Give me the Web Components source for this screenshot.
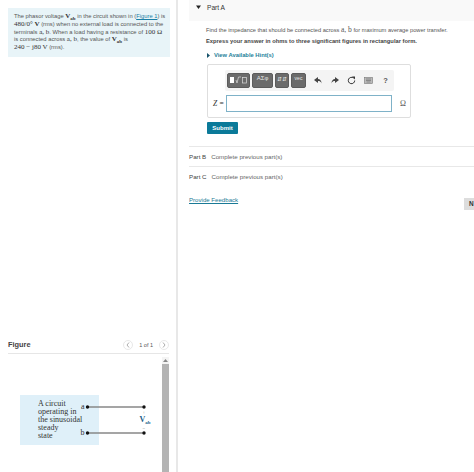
<!DOCTYPE html>
<html>
<head>
<meta charset="utf-8">
<title>Part A</title>
<style>
  html, body { margin: 0; padding: 0; height: 472px; overflow: hidden; background: #fff; }
  body { font-family: "Liberation Sans", Arial, sans-serif; color: #333; }
</style>
</head>
<body>
<problem-page></problem-page>

<script>
class ProblemPage extends HTMLElement {
    constructor() {
        super();
        this.shadowDOM = this.attachShadow({ mode: 'open' })
    }

    connectedCallback() {
        this.shadowDOM.innerHTML = `
        <style>
            :host { display: flex; width: 474px; height: 472px; overflow: hidden; }
            .left { width: 176px; flex: none; border-right: 2px solid #e8e8e8; display: flex; flex-direction: column; }
            .right { flex: 1; min-width: 0; padding-left: 11px; }
        </style>
        <div class="left">
            <statement-box></statement-box>
            <figure-panel></figure-panel>
        </div>
        <div class="right">
            <part-a></part-a>
            <part-row name="Part B"></part-row>
            <part-row name="Part C"></part-row>
            <feedback-row></feedback-row>
        </div>
        `;
    }
}

class StatementBox extends HTMLElement {
    constructor() {
        super();
        this.shadowDOM = this.attachShadow({ mode: 'open' })
    }

    connectedCallback() {
        this.shadowDOM.innerHTML = `
        <style>
            :host { display: block; margin: 8px 6px 0 8px; background: #e8f4f8; padding: 5px 5px 0 6px; height: 49px; box-sizing: border-box; font-size: 5.8px; line-height: 7.8px; color: #555; white-space: nowrap; }
            b, .m { font-family: "Liberation Serif", serif; font-size: 7px; color: #333; }
            b { font-weight: bold; }
            sub { font-size: 5px; line-height: 0; }
            a { color: #1a7fa6; text-decoration: underline; }
        </style>
        The phasor voltage <b>V<sub>ab</sub></b> in the circuit shown in (<a>Figure 1</a>) is<br>
        <span class="m">480/0° <b>V</b></span> (rms) when no external load is connected to the<br>
        terminals <span class="m">a, b</span>. When a load having a resistance of <span class="m">100 Ω</span><br>
        is connected across <span class="m">a, b</span>, the value of <b>V<sub>ab</sub></b> is<br>
        <span class="m">240 − j80 V</span> (rms).
        `;
    }
}

class FigurePanel extends HTMLElement {
    constructor() {
        super();
        this.shadowDOM = this.attachShadow({ mode: 'open' })
    }

    connectedCallback() {
        this.shadowDOM.innerHTML = `
        <style>
            :host { display: flex; flex-direction: column; margin: 279px 7px 0 8px; flex: 1; min-height: 0; }
            .head { display: flex; align-items: center; justify-content: space-between; height: 18px; box-sizing: border-box; border-bottom: 1px solid #e6e6e6; }
            .title { font-size: 7.400px; font-weight: bold; color: #444; }
            .pager { display: flex; align-items: center; gap: 6px; font-size: 5.500px; color: #555; }
            .pg { width: 10px; height: 10px; border: 1px solid #e8e8e8; border-radius: 50%; box-sizing: border-box; display: grid; place-items: center; }
            .body { flex: 1; display: flex; min-height: 0; }
            .canvas { flex: 1; min-width: 0; padding-top: 41px; }
            .scroll { width: 7px; margin-top: 3px; display: flex; flex-direction: column; background: #f4f4f4; }
            .arrow { height: 7px; display: grid; place-items: center; }
            .thumb { flex: 1; background: #b4b4b4; }
        </style>
        <div class="head">
            <span class="title">Figure</span>
            <span class="pager">
                <span class="pg"><svg width="4" height="6" viewBox="0 0 4 6"><path d="M3 .5 1 3l2 2.5" fill="none" stroke="#999" stroke-width=".8"/></svg></span>
                <span>1 of 1</span>
                <span class="pg"><svg width="4" height="6" viewBox="0 0 4 6"><path d="M1 .5 3 3 1 5.500" fill="none" stroke="#999" stroke-width=".8"/></svg></span>
            </span>
        </div>
        <div class="body">
            <div class="canvas"><circuit-figure></circuit-figure></div>
            <div class="scroll">
                <div class="arrow"><svg width="5" height="3" viewBox="0 0 5 3"><path d="M0 3 2.500 0 5 3z" fill="#888"/></svg></div>
                <div class="thumb"></div>
            </div>
        </div>
        `;
    }
}

class CircuitFigure extends HTMLElement {
    constructor() {
        super();
        this.shadowDOM = this.attachShadow({ mode: 'open' })
    }

    connectedCallback() {
        this.shadowDOM.innerHTML = `
        <style>
            :host { display: block; position: relative; width: 154px; height: 60px; }
            .box { position: absolute; left: 12px; top: 0; width: 79px; height: 50px; background: #dff0f9; box-sizing: border-box; padding: 5px 0 0 18px; font: 8px/8.100px "Liberation Serif", serif; color: #333; }
            svg { position: absolute; left: 0; top: 0; }
            text { font-family: "Liberation Serif", serif; }
        </style>
        <div class="box">A circuit<br>operating in<br>the sinusoidal<br>steady<br>state</div>
        <svg width="154" height="60" viewBox="0 0 154 60">
            <path d="M79.500 12H136M79.500 38H136" stroke="#888" stroke-width="1.300"/>
            <circle cx="79.500" cy="12" r="1.700" fill="#111"/>
            <circle cx="136" cy="12" r="1.700" fill="#111"/>
            <circle cx="79.500" cy="38" r="1.700" fill="#111"/>
            <circle cx="136" cy="38" r="1.700" fill="#111"/>
            <text x="73" y="14" font-size="8" fill="#333">a</text>
            <text x="72.500" y="40" font-size="8" fill="#333">b</text>
            <text x="134.500" y="18.500" font-size="5" fill="#666">+</text>
            <text x="131.500" y="27" font-size="8" font-weight="bold" fill="#1d5f8a">V<tspan font-size="5" dy="1.500">ab</tspan></text>
            <text x="134.500" y="35" font-size="5" fill="#666">−</text>
        </svg>
        `;
    }
}

class PartA extends HTMLElement {
    constructor() {
        super();
        this.shadowDOM = this.attachShadow({ mode: 'open' })
    }

    connectedCallback() {
        this.shadowDOM.innerHTML = `
        <style>
            :host { display: block; font-size: 5.800px; color: #555; }
            .head { display: flex; align-items: center; height: 21px; box-sizing: border-box; padding: 0 0 7px 7px; background: #f9f9f9; font-size: 6.600px; color: #333; gap: 6px; }
            .content { padding: 4px 0 12px 17px; }
            .find { font-size: 5.700px; line-height: 9px; white-space: nowrap; }
            .find i { font: 7.500px "Liberation Serif", serif; font-style: normal; }
            .express { margin-top: 2px; font-size: 5.750px; font-weight: bold; line-height: 9px; color: #444; white-space: nowrap; }
            .hint { display: flex; align-items: center; gap: 4px; margin: 5px 0 0 1px; font-weight: bold; color: #1f7f9a; line-height: 9px; }
            .submit { display: block; width: 31px; height: 12px; margin: 4px 0 0 1px; background: #0b7a99; color: #fff; font-size: 6px; font-weight: bold; line-height: 12px; border-radius: 1px; text-align: center; }
            answer-box { margin: 4px 0 0 1px; }
        </style>
        <div class="head">
            <svg width="5" height="4" viewBox="0 0 5 4"><path d="M0 .5h5L2.500 4z" fill="#222"/></svg>
            <span>Part A</span>
        </div>
        <div class="content">
            <div class="find">Find the impedance that should be connected across <i>a, b</i> for maximum average power transfer.</div>
            <div class="express">Express your answer in ohms to three significant figures in rectangular form.</div>
            <div class="hint"><svg width="3" height="5" viewBox="0 0 3 5"><path d="M0 0l3 2.500L0 5z" fill="#17536b"/></svg><span>View Available Hint(s)</span></div>
            <answer-box></answer-box>
            <span class="submit">Submit</span>
        </div>
        `;
    }
}

class AnswerBox extends HTMLElement {
    constructor() {
        super();
        this.shadowDOM = this.attachShadow({ mode: 'open' })
    }

    connectedCallback() {
        this.shadowDOM.innerHTML = `
        <style>
            :host { display: block; width: 204px; height: 54px; box-sizing: border-box; border: 1px solid #dedede; border-radius: 2px; padding: 5px 0 0 5px; }
            .tools { display: flex; align-items: center; gap: 2px; height: 21px; width: 169px; margin-left: 12px; box-sizing: border-box; padding: 0 0 0 2px; background: #f4f4f4; border-radius: 2px; }
            .btn { height: 15px; background: #6b6b6b; border: 1px solid #5c5c5c; box-sizing: border-box; border-radius: 2px; color: #e8e8e8; font-size: 6px; display: flex; padding-top: 1px; justify-content: center; }
            .b1 { width: 23px; } .b2 { width: 21px; } .b3 { width: 14px; } .b4 { width: 15px; font-size: 5px; }
            .ic { width: 15px; display: grid; place-items: center; font-size: 7.500px; font-weight: bold; color: #555; }
            .row { display: flex; align-items: center; margin-top: 4px; font-size: 7px; color: #333; }
            .z { width: 13px; font: italic 7.500px "Liberation Serif", serif; white-space: nowrap; }
            .input { width: 166px; height: 17px; box-sizing: border-box; border: 1px solid #7fb2c8; background: #fff; }
            .unit { margin-left: 8px; font: 8px "Liberation Serif", serif; color: #555; }
        </style>
        <div class="tools">
            <span class="btn b1"><svg width="20" height="10" viewBox="0 0 20 10"><rect x="1" y="2" width="4" height="6" fill="#fff"/><path d="M7 5l1 3 1.500-6H12" fill="none" stroke="#ddd" stroke-width=".7"/><rect x="13.500" y="2.500" width="4" height="5.500" fill="none" stroke="#ddd" stroke-width=".7"/></svg></span>
            <span class="btn b2">ΑΣφ</span>
            <span class="btn b3">⇵⇵</span>
            <span class="btn b4">vec</span>
            <span class="ic" style="margin-left:2px"><svg width="8" height="7" viewBox="0 0 8 7"><path d="M4 0 0 3l4 3V4c1.500 0 3 .5 3.500 2.500C7.500 3.500 6 2 4 2z" fill="#444"/></svg></span>
            <span class="ic"><svg width="8" height="7" viewBox="0 0 8 7"><path d="M4 0l4 3-4 3V4C2.500 4 1 4.500.5 6.500.5 3.500 2 2 4 2z" fill="#444"/></svg></span>
            <span class="ic"><svg width="9" height="9" viewBox="0 0 9 9"><path d="M6.500 2A3.200 3.200 0 1 0 7.700 4.500" fill="none" stroke="#333" stroke-width="1"/><path d="M5 0.500h3v3z" fill="#333"/></svg></span>
            <span class="ic"><svg width="9" height="7" viewBox="0 0 9 7"><rect x=".5" y=".5" width="8" height="6" fill="#bbb" stroke="#777" stroke-width=".6"/><path d="M2 2h5M2 3.500h5M2.500 5h4" stroke="#666" stroke-width=".6"/></svg></span>
            <span class="ic">?</span>
        </div>
        <div class="row">
            <span class="z">Z =</span>
            <span class="input"></span>
            <span class="unit">Ω</span>
        </div>
        `;
    }
}

class PartRow extends HTMLElement {
    constructor() {
        super();
        this.shadowDOM = this.attachShadow({ mode: 'open' })
    }

    connectedCallback() {
        this.shadowDOM.innerHTML = `
        <style>
            :host { display: flex; gap: 5px; height: 20px; box-sizing: border-box; align-items: center; border-top: 1px solid #e8e8e8; font-size: 6.200px; color: #666; }
            .name { color: #444; }
        </style>
        <span class="name">${this.getAttribute('name')}</span>
        <span>Complete previous part(s)</span>
        `;
    }
}

class FeedbackRow extends HTMLElement {
    constructor() {
        super();
        this.shadowDOM = this.attachShadow({ mode: 'open' })
    }

    connectedCallback() {
        this.shadowDOM.innerHTML = `
        <style>
            :host { display: flex; justify-content: space-between; align-items: flex-start; margin-top: 9px; font-size: 6.100px; line-height: 9px; }
            a { color: #1a7a96; text-decoration: underline; }
            .next { width: 10px; height: 12px; margin-top: 3px; background: #ddd; color: #333; font-size: 6.500px; font-weight: bold; line-height: 12px; padding-left: 5px; box-sizing: border-box; overflow: hidden; }
        </style>
        <a>Provide Feedback</a>
        <span class="next">N</span>
        `;
    }
}

customElements.define('problem-page', ProblemPage);
customElements.define('statement-box', StatementBox);
customElements.define('figure-panel', FigurePanel);
customElements.define('circuit-figure', CircuitFigure);
customElements.define('part-a', PartA);
customElements.define('answer-box', AnswerBox);
customElements.define('part-row', PartRow);
customElements.define('feedback-row', FeedbackRow);
</script>
</body>
</html>
